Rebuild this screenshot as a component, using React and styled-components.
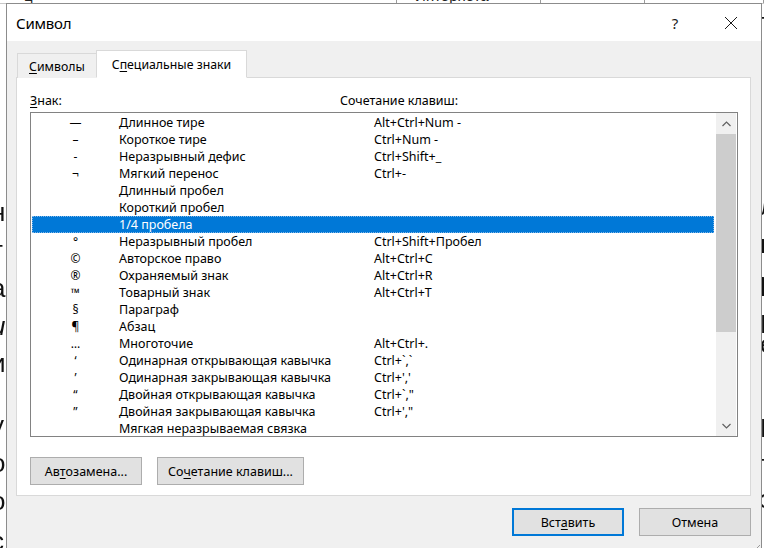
import React from "react";
import styled, { createGlobalStyle } from "styled-components";

const GlobalStyle = createGlobalStyle`
  html, body {
    margin: 0;
    padding: 0;
    overflow: hidden;
    background: #ffffff;
  }
  body {
    font-family: "Noto Sans", "Open Sans", sans-serif;
  }
`;

const rows = [
  { sym: "—", name: "Длинное тире", keys: "Alt+Ctrl+Num -" },
  { sym: "–", name: "Короткое тире", keys: "Ctrl+Num -" },
  { sym: "-", name: "Неразрывный дефис", keys: "Ctrl+Shift+_" },
  { sym: "¬", name: "Мягкий перенос", keys: "Ctrl+-" },
  { sym: "", name: "Длинный пробел", keys: "" },
  { sym: "", name: "Короткий пробел", keys: "" },
  { sym: "", name: "1/4 пробела", keys: "", selected: true },
  { sym: "°", name: "Неразрывный пробел", keys: "Ctrl+Shift+Пробел" },
  { sym: "©", name: "Авторское право", keys: "Alt+Ctrl+C" },
  { sym: "®", name: "Охраняемый знак", keys: "Alt+Ctrl+R" },
  { sym: "™", name: "Товарный знак", keys: "Alt+Ctrl+T" },
  { sym: "§", name: "Параграф", keys: "" },
  { sym: "¶", name: "Абзац", keys: "" },
  { sym: "…", name: "Многоточие", keys: "Alt+Ctrl+." },
  { sym: "‘", name: "Одинарная открывающая кавычка", keys: "Ctrl+`,`" },
  { sym: "’", name: "Одинарная закрывающая кавычка", keys: "Ctrl+','" },
  { sym: "“", name: "Двойная открывающая кавычка", keys: "Ctrl+`,\"" },
  { sym: "”", name: "Двойная закрывающая кавычка", keys: "Ctrl+',\"" },
  { sym: "", name: "Мягкая неразрываемая связка", keys: "" },
];

// letters of the Word document peeking out behind the dialog
const leftGlyphs = [
  { ch: "н", top: 198 },
  { ch: "т", top: 236 },
  { ch: "а", top: 274 },
  { ch: "и", top: 312, italic: true },
  { ch: "и", top: 349 },
  { ch: "у", top: 411 },
  { ch: "о", top: 449 },
  { ch: "о", top: 487 },
  { ch: "с", top: 527 },
];

const rightGlyphs = [
  { ch: "т", top: 8 },
  { ch: "л", top: 192 },
  { ch: "п", top: 230 },
  { ch: "р", top: 268 },
  { ch: "Б", top: 310 },
  { ch: "е", top: 330 },
  { ch: "Ц", top: 414 },
  { ch: "т", top: 450 },
  { ch: "з", top: 485 },
];

export default function App() {
  return (
    <>
      <GlobalStyle />
      <Desktop>
        <TableTop>
          <TableCell $w={396}>ц</TableCell>
          <TableCell $w={146}>Интернета</TableCell>
          <TableCell $w={105} />
          <TableCell $w={120} />
        </TableTop>
        {leftGlyphs.map((g, i) => (
          <DocGlyph key={"l" + i} $top={g.top} $left={-9} $italic={g.italic}>
            {g.ch}
          </DocGlyph>
        ))}
        {rightGlyphs.map((g, i) => (
          <DocGlyph key={"r" + i} $top={g.top} $left={760}>
            {g.ch}
          </DocGlyph>
        ))}

        <Window>
          <TitleBar>
            <Title>Символ</Title>
            <TitleButton>?</TitleButton>
            <TitleButton>
              <svg width="14" height="14" viewBox="0 0 14 14">
                <path d="M1 1 L13 13 M13 1 L1 13" stroke="#1a1a1a" strokeWidth="1" fill="none" />
              </svg>
            </TitleButton>
          </TitleBar>

          <Body>
            <Tabs>
              <Tab>
                <u>С</u>имволы
              </Tab>
              <Tab $active>
                С<u>п</u>ециальные знаки
              </Tab>
            </Tabs>

            <Panel>
              <HeaderRow>
                <HeaderLabel>
                  <u>З</u>нак:
                </HeaderLabel>
                <HeaderLabel>Сочетание клавиш:</HeaderLabel>
              </HeaderRow>

              <ListBox>
                <Items>
                  {rows.map((r, i) => (
                    <Row key={i} $selected={r.selected}>
                      <SymCell>{r.sym}</SymCell>
                      <NameCell>{r.name}</NameCell>
                      <KeysCell>{r.keys}</KeysCell>
                    </Row>
                  ))}
                </Items>
                <ScrollBar>
                  <ScrollArrow>
                    <svg width="9" height="6" viewBox="0 0 9 6">
                      <path d="M0.5 5 L4.5 1 L8.5 5" stroke="#606060" strokeWidth="1.2" fill="none" />
                    </svg>
                  </ScrollArrow>
                  <ScrollTrack>
                    <Thumb />
                  </ScrollTrack>
                  <ScrollArrow>
                    <svg width="9" height="6" viewBox="0 0 9 6">
                      <path d="M0.5 1 L4.5 5 L8.5 1" stroke="#606060" strokeWidth="1.2" fill="none" />
                    </svg>
                  </ScrollArrow>
                </ScrollBar>
              </ListBox>

              <PanelButtons>
                <Button $w={112}>
                  Ав<u>т</u>озамена...
                </Button>
                <Button $w={147}>
                  Со<u>ч</u>етание клавиш...
                </Button>
              </PanelButtons>
            </Panel>

            <Footer>
              <Button $w={112} $primary>
                Вст<u>а</u>вить
              </Button>
              <Button $w={112}>Отмена</Button>
            </Footer>
          </Body>

          <Grip>
            <svg width="10" height="10" viewBox="0 0 10 10">
              <path d="M9 2 L2 9 M9 5 L5 9 M9 8 L8 9" stroke="#9a9a9a" strokeWidth="1" fill="none" />
            </svg>
          </Grip>
        </Window>
      </Desktop>
    </>
  );
}

const Desktop = styled.div`
  position: relative;
  width: 764px;
  height: 548px;
  background: #ffffff;
  overflow: hidden;
`;

const TableTop = styled.div`
  display: flex;
  height: 3px;
  padding-left: 6px;
  border-bottom: 1px solid #c8c8c8;
  overflow: hidden;
`;

const TableCell = styled.div`
  width: ${(p) => p.$w}px;
  border-right: 1px solid #9b9b9b;
  font-family: "Liberation Sans", Arial, sans-serif;
  font-size: 15px;
  line-height: 15px;
  margin-top: -12px;
  padding-left: 18px;
  color: #222;
  box-sizing: border-box;
`;

const DocGlyph = styled.div`
  position: absolute;
  top: ${(p) => p.$top}px;
  left: ${(p) => p.$left}px;
  font-family: "Liberation Sans", Arial, sans-serif;
  font-size: 26px;
  line-height: 28px;
  font-style: ${(p) => (p.$italic ? "italic" : "normal")};
  color: #111;
  will-change: transform;
`;

const Window = styled.div`
  position: absolute;
  left: 6px;
  top: 3px;
  width: 756px;
  height: 548px;
  box-sizing: border-box;
  border: 1px solid #8c8c8c;
  background: #f0f0f0;
  display: flex;
  flex-direction: column;
  color: #000;
`;

const TitleBar = styled.div`
  height: 37px;
  background: #ffffff;
  display: flex;
  align-items: center;
  gap: 10px;
  padding-left: 9px;
  padding-right: 7px;
  flex-shrink: 0;
`;

const Title = styled.div`
  flex: 1;
  font-size: 15px;
  letter-spacing: -0.2px;
`;

const TitleButton = styled.div`
  width: 46px;
  height: 37px;
  display: flex;
  align-items: center;
  justify-content: center;
  font-size: 15px;
  color: #1a1a1a;
`;

const Body = styled.div`
  padding: 9px 10px 0 9px;
  display: flex;
  flex-direction: column;
`;

const Tabs = styled.div`
  display: flex;
  align-items: flex-end;
  height: 28px;
  padding-left: 1px;
  margin-bottom: -1px;
  position: relative;
  z-index: 1;
`;

const Tab = styled.div`
  box-sizing: border-box;
  height: ${(p) => (p.$active ? 28 : 25)}px;
  padding: 0 ${(p) => (p.$active ? 15 : 11)}px;
  display: flex;
  align-items: center;
  font-size: 12.3px;
  background: ${(p) => (p.$active ? "#ffffff" : "#f0f0f0")};
  border: 1px solid #d9d9d9;
  border-bottom: ${(p) => (p.$active ? "1px solid #ffffff" : "none")};
  margin-left: ${(p) => (p.$active ? "-1px" : "0")};
  & u {
    text-underline-offset: 2px;
  }
`;

const Panel = styled.div`
  background: #ffffff;
  border: 1px solid #d9d9d9;
  padding: 14px 12px 10px 13px;
  display: flex;
  flex-direction: column;
`;

const HeaderRow = styled.div`
  display: flex;
  height: 17px;
  align-items: center;
  margin-bottom: 3px;
  & > :first-child {
    width: 310px;
  }
`;

const HeaderLabel = styled.div`
  font-size: 12.5px;
  & u {
    text-underline-offset: 2px;
  }
`;

const ListBox = styled.div`
  height: 325px;
  box-sizing: border-box;
  border: 1px solid #828282;
  display: flex;
  overflow: hidden;
`;

const Items = styled.div`
  flex: 1;
  padding: 1px 1px 0 1px;
  overflow: hidden;
`;

const Row = styled.div`
  display: grid;
  grid-template-columns: 87px 255px 1fr;
  height: 17px;
  align-items: center;
  font-size: 12.5px;
  white-space: nowrap;
  box-sizing: border-box;
  background: ${(p) => (p.$selected ? "#0078d7" : "transparent")};
  color: ${(p) => (p.$selected ? "#ffffff" : "#000000")};
  outline: ${(p) => (p.$selected ? "1px dotted #7fb6e8" : "none")};
  outline-offset: -1px;
`;

const SymCell = styled.div`
  text-align: center;
  font-size: 12px;
`;

const NameCell = styled.div``;

const KeysCell = styled.div``;

const ScrollBar = styled.div`
  width: 20px;
  margin: 0 1px;
  display: flex;
  flex-direction: column;
  background: #f0f0f0;
`;

const ScrollArrow = styled.div`
  height: 21px;
  display: flex;
  align-items: center;
  justify-content: center;
  flex-shrink: 0;
`;

const ScrollTrack = styled.div`
  flex: 1;
`;

const Thumb = styled.div`
  height: 198px;
  background: #cdcdcd;
`;

const PanelButtons = styled.div`
  display: flex;
  gap: 15px;
  margin-top: 20px;
`;

const Button = styled.div`
  width: ${(p) => p.$w}px;
  height: 28px;
  box-sizing: border-box;
  display: flex;
  align-items: center;
  justify-content: center;
  background: #e1e1e1;
  border: ${(p) => (p.$primary ? "2px solid #0078d7" : "1px solid #adadad")};
  font-size: 12.5px;
  & u {
    text-underline-offset: 2px;
  }
`;

const Footer = styled.div`
  display: flex;
  justify-content: flex-end;
  gap: 15px;
  padding-top: 12px;
`;

const Grip = styled.div`
  position: absolute;
  right: 0;
  bottom: 4px;
  width: 10px;
  height: 10px;
`;
